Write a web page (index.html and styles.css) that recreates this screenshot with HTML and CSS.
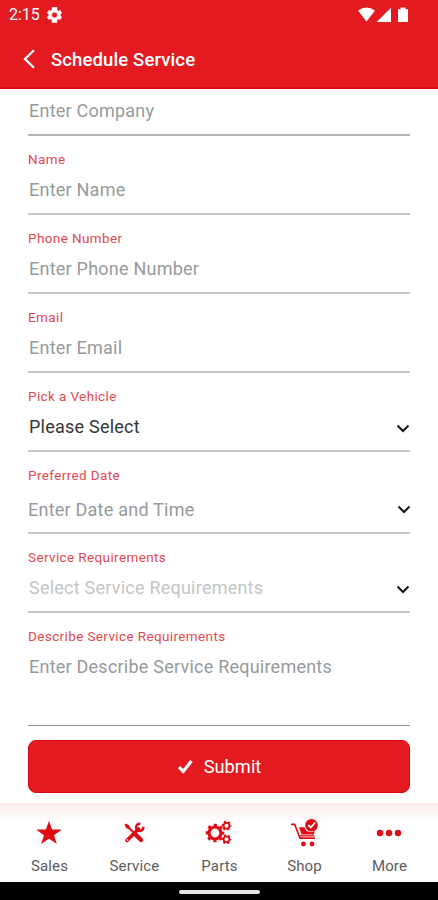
FILE: index.html
```html
<!DOCTYPE html>
<html lang="en">
<head>
<meta charset="utf-8">
<title>Schedule Service</title>
<link rel="stylesheet" href="styles.css">
</head>
<body>
<div class="screen">
  <header class="top">
    <div class="status">
      <span class="clock">2:15</span>
      <svg class="gear" width="15" height="16" viewBox="2 2 20 20"><path fill="#fff" stroke="#fff" fill-rule="evenodd" d="M19.4 13a7.500 7.500 0 0 0 0-2l2.100-1.600-2-3.500-2.500 1a7.500 7.500 0 0 0-1.700-1L15 2H9l-.4 3.900a7.500 7.500 0 0 0-1.700 1l-2.400-1-2 3.500L4.600 11a7.500 7.500 0 0 0 0 2l-2.100 1.600 2 3.500 2.400-1a7.500 7.500 0 0 0 1.700 1L9 22h6l.3-3.900a7.500 7.500 0 0 0 1.700-1l2.500 1 2-3.500zM12 8a4 4 0 1 1 0 8 4 4 0 0 1 0-8z"/></svg>
      <svg class="signals" width="51" height="16" viewBox="0 0 51 16" fill="#fff"><path d="M0 3.500Q8.500-2.500 17 3.500L8.500 14.500zM18.700 15H33V0.700zM40 2.300h2.600V.6h4.800v1.700H50V15H40z"/></svg>
    </div>
    <div class="titlebar">
      <svg class="back" width="13" height="20" viewBox="0 0 13 20"><path d="M11 1.200L2 10l9 8.800" fill="none" stroke="#fff" stroke-width="2.300"/></svg>
      <h1>Schedule Service</h1>
    </div>
  </header>
  <main class="form">
    <div class="field company"><div class="value">Enter Company</div></div>
    <div class="field name"><label>Name</label><div class="value">Enter Name</div></div>
    <div class="field phone"><label>Phone Number</label><div class="value">Enter Phone Number</div></div>
    <div class="field email"><label>Email</label><div class="value">Enter Email</div></div>
    <div class="field vehicle"><label>Pick a Vehicle</label><div class="value chosen">Please Select<svg class="chev" width="14" height="9" viewBox="0 0 14 9"><path d="M1.500 1.500L7 7l5.500-5.500"/></svg></div></div>
    <div class="field date"><label>Preferred Date</label><div class="value">Enter Date and Time<svg class="chev" width="14" height="9" viewBox="0 0 14 9"><path d="M1.500 1.500L7 7l5.500-5.500"/></svg></div></div>
    <div class="field needs"><label>Service Requirements</label><div class="value faint">Select Service Requirements<svg class="chev" width="14" height="9" viewBox="0 0 14 9"><path d="M1.500 1.500L7 7l5.500-5.500"/></svg></div></div>
    <div class="field describe"><label>Describe Service Requirements</label><div class="value">Enter Describe Service Requirements</div></div>
    <button class="submit"><svg width="17" height="16" viewBox="0 0 17 16"><path d="M2 8.200l4.200 4.200L14.500 2" fill="none" stroke="#fff" stroke-width="3.200"/></svg><span>Submit</span></button>
  </main>
  <nav class="tabs">
    <div class="tab"><svg width="34" height="32" viewBox="0 0 34 32"><path fill="#e00b15" d="M17 4l3.100 8.500 9.700.1-7.800 5.600 2.900 8.800-7.900-5.300L9.100 27l2.900-8.800-7.800-5.600 9.700-.1z"/></svg><span>Sales</span></div>
    <div class="tab"><svg width="34" height="32" viewBox="0 0 34 32"><g fill="none" stroke="#e00b15"><path d="M8.500 7.500L17 16" stroke-width="2"/><path d="M19 18l5 5" stroke-width="4.400" stroke-linecap="round"/><path d="M10 23.500L21.500 12" stroke-width="3.600" stroke-linecap="round"/><path d="M23.300 6.800a3.600 3.600 0 1 0 3 3" stroke-width="2.500"/></g><path fill="#e00b15" d="M7.500 8l1.600-1.600 3.300 2.300.5 2.200-1.300 1.200-2-.6z"/><circle cx="10.500" cy="23" r=".8" fill="#fff"/></svg><span>Service</span></div>
    <div class="tab"><svg width="34" height="32" viewBox="0 0 34 32"><g fill="none" stroke="#e00b15"><circle cx="13" cy="16" r="6" stroke-width="3.200"/><circle cx="13" cy="16" r="8" stroke-width="2.700" stroke-dasharray="3.100 3.183" stroke-dashoffset="1.550"/><circle cx="24.500" cy="8.700" r="2.900" stroke-width="1.800"/><circle cx="24.500" cy="8.700" r="4.100" stroke-width="1.700" stroke-dasharray="2.100 2.193" stroke-dashoffset="1"/><circle cx="24.500" cy="22.300" r="2.900" stroke-width="1.800"/><circle cx="24.500" cy="22.300" r="4.100" stroke-width="1.700" stroke-dasharray="2.100 2.193" stroke-dashoffset="1"/></g></svg><span>Parts</span></div>
    <div class="tab"><svg width="34" height="32" viewBox="0 0 34 32"><g fill="none" stroke="#e00b15"><path d="M4 7.300h3.700L13 21.200h15" stroke-width="1.700"/><path d="M12.500 18.800h15" stroke-width="1.300"/></g><path fill="#e00b15" d="M12 10.300h5.200l2.300 3.800 4.300 1.200 3.700-.8-.4 3.100H14.500z"/><circle cx="24.500" cy="8.200" r="6.300" fill="#e00b15"/><path d="M21.200 8l2.500 2.500 4.500-5" fill="none" stroke="#fff" stroke-width="1.800"/><g fill="#e00b15"><circle cx="16.400" cy="27" r="2.400"/><circle cx="25" cy="27" r="2.400"/></g></svg><span>Shop</span></div>
    <div class="tab"><svg width="34" height="32" viewBox="0 0 34 32" fill="#e00b15"><circle cx="8" cy="16" r="3.200"/><circle cx="17" cy="16" r="3.200"/><circle cx="26" cy="16" r="3.200"/></svg><span>More</span></div>
  </nav>
  <footer class="home"><div class="pill"></div></footer>
</div>
</body>
</html>
```
FILE: styles.css
```css
* { box-sizing: border-box; }
body { margin: 0; font-family: Roboto, sans-serif; background: #fff; }
.screen { width: 438px; height: 900px; display: flex; flex-direction: column; overflow: hidden; }
.top { height: 89px; flex: none; background: #e31b20; border-bottom: 2px solid #dc0911; color: #fff; }
.status { height: 29px; display: flex; align-items: center; padding: 0 27px 0 9px; }
.clock { font-size: 16px; width: 31px; margin-right: 7px; }
.signals { margin-left: auto; margin-right: 2px; }
.titlebar { display: flex; align-items: center; height: 60px; padding-left: 23px; }
h1 { margin: 1px 0 0 15px; font-size: 18.500px; font-weight: 500; line-height: 24px; letter-spacing: .12px; }
.form { height: 714px; flex: none; padding: 0 28px; }
.field { border-bottom: 2px solid #c6c6c6; height: 79px; padding-top: 15px; }
.field label { display: block; font-size: 13.500px; line-height: 16px; letter-spacing: .38px; color: #e5484f; }
.value { display: flex; justify-content: space-between; align-items: center; margin-top: 12px; padding-left: 1px; font-size: 18px; line-height: 22px; letter-spacing: .23px; color: #969a9a; white-space: nowrap; }
.chosen { color: #363636; }
.faint { color: #c3c5c5; }
.chev { margin: 3px 0 0; fill: none; stroke: #151515; stroke-width: 2; }
.company { height: 47px; padding-top: 11px; border-color: #b5b5b5; }
.company .value { margin-top: 0; }
.date { height: 82px; }
.date .value { margin-top: 16px; padding-left: 0; }
.date .chev { margin: 0 -1px 1px 0; }
.describe { height: 113px; border-bottom: 1px solid #989898; }
.submit { display: flex; align-items: center; justify-content: center; width: 382px; height: 53px; margin: 14px 0 0; padding: 0; border: 1px solid #da0a12; border-radius: 8px; background: #e31b20; color: #fff; font: 400 18.300px/24px Roboto, sans-serif; }
.submit svg { margin-right: 10px; }
.submit span { padding-top: 1px; }
.tabs { height: 79px; flex: none; display: grid; grid-template-columns: repeat(5, 85px); padding: 14px 0 0 7px; background: linear-gradient(#fde9ea, #fff 20px); }
.tab { display: flex; flex-direction: column; align-items: center; font-size: 15px; line-height: 18px; letter-spacing: .15px; color: #5c5c5c; }
.tab svg { margin-left: -1px; }
.tab span { margin-top: 8px; }
.home { height: 18px; flex: none; background: #000; display: flex; justify-content: center; padding-top: 8px; }
.pill { width: 81px; height: 4px; border-radius: 2px; background: #e5e5e5; }
```
